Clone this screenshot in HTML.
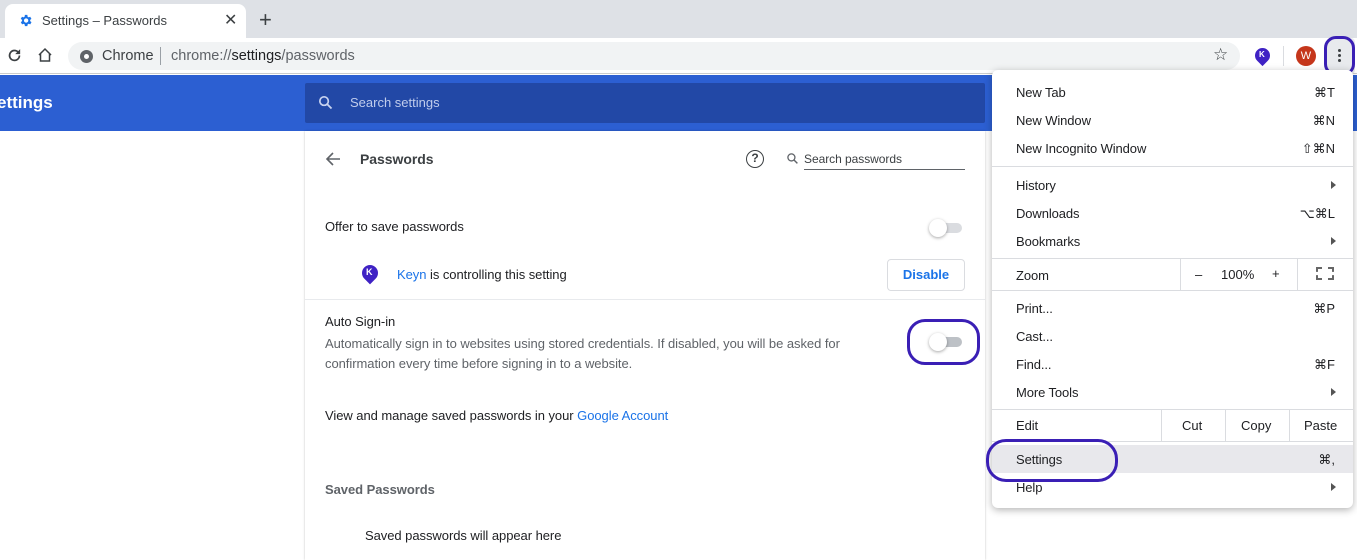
<!DOCTYPE html>
<html><head><meta charset="utf-8"><style>
*{margin:0;padding:0;box-sizing:border-box}
body{width:1357px;height:560px;overflow:hidden;position:relative;font-family:"Liberation Sans",sans-serif;background:#fff;color:#202124;font-size:13px}
.a{position:absolute;white-space:nowrap}
.t{letter-spacing:-0.05px}
.mi{position:absolute;left:1016px;font-size:13px;color:#202124;letter-spacing:-0.1px}
.sc{position:absolute;right:22px;font-size:13px;color:#202124}
.arr{position:absolute;left:1331px;width:0;height:0;border-left:5px solid #555;border-top:4px solid transparent;border-bottom:4px solid transparent}
.hr{position:absolute;left:992px;width:361px;height:1px;background:#dadce0}
.vr{position:absolute;width:1px;background:#dadce0}
</style></head><body>
<!-- tab strip -->
<div class="a" style="left:0;top:0;width:1357px;height:38px;background:#dee1e6"></div>
<div class="a" style="left:5px;top:4px;width:241px;height:36px;background:#fff;border-radius:8px 8px 0 0"></div>
<svg class="a" style="left:18px;top:13px" width="15" height="15" viewBox="0 0 24 24"><path fill="#1a73e8" d="M19.4 13a7.5 7.5 0 0 0 0-2l2.1-1.6-2-3.5-2.5 1a7 7 0 0 0-1.7-1L15 3h-4l-.4 2.9a7 7 0 0 0-1.7 1l-2.5-1-2 3.5L6.6 11a7.5 7.5 0 0 0 0 2l-2.1 1.6 2 3.5 2.5-1a7 7 0 0 0 1.7 1L11 21h4l.4-2.9a7 7 0 0 0 1.7-1l2.5 1 2-3.5zM13 15.5a3.5 3.5 0 1 1 0-7 3.5 3.5 0 0 1 0 7z"/></svg>
<div class="a" style="left:42px;top:13px;font-size:13px;color:#3c4043">Settings – Passwords</div>
<div class="a" style="left:224px;top:10px;font-size:16px;color:#3c4043">✕</div>
<div class="a" style="left:259px;top:7px;font-size:22px;color:#3c4043">+</div>
<!-- toolbar -->
<div class="a" style="left:0;top:38px;width:1357px;height:36px;background:#fff;border-bottom:1px solid #ccc"></div>
<svg class="a" style="left:6px;top:47px" width="17" height="17" viewBox="0 0 24 24"><path fill="none" stroke="#3c4043" stroke-width="2.4" d="M19 12a7 7 0 1 1-2-5"/><path fill="#3c4043" d="M20 3v7h-7z"/></svg>
<svg class="a" style="left:36px;top:46px" width="18" height="18" viewBox="0 0 24 24"><path fill="none" stroke="#3c4043" stroke-width="2" d="M4 12l8-8 8 8M6 10v10h12V10"/></svg>
<div class="a" style="left:68px;top:42px;width:1172px;height:28px;background:#f1f3f4;border-radius:14px"></div>
<div class="a" style="left:80px;top:50px;width:13px;height:13px;border-radius:50%;background:#5f6368"></div>
<div class="a" style="left:84px;top:54px;width:5px;height:5px;border-radius:50%;background:#fff"></div>
<div class="a" style="left:102px;top:48px;font-size:14.5px;color:#3c4043">Chrome</div>
<div class="a" style="left:160px;top:47px;width:1px;height:18px;background:#9aa0a6"></div>
<div class="a" style="left:171px;top:48px;font-size:14.5px;color:#5f6368">chrome://<span style="color:#202124">settings</span>/passwords</div>
<div class="a" style="left:1213px;top:45px;font-size:17px;color:#3c4043">☆</div>
<div class="a" style="left:1255px;top:48px;width:15px;height:15px;border-radius:50% 50% 50% 0;transform:rotate(-45deg);background:#3f22c4"></div>
<div class="a" style="left:1259px;top:50px;font-size:8px;color:#fff;font-weight:bold">K</div>
<div class="a" style="left:1283px;top:46px;width:1px;height:20px;background:#dadce0"></div>
<div class="a" style="left:1296px;top:46px;width:20px;height:20px;border-radius:50%;background:#c5361b;color:#fff;font-size:11px;text-align:center;line-height:20px">W</div>
<div class="a" style="left:1327px;top:38px;width:28px;height:36px;background:#e8eaed;border-radius:4px"></div>
<div class="a" style="left:1324px;top:36px;width:31px;height:40px;border:3px solid #3a1fb5;border-radius:12px"></div>
<div class="a" style="left:1338px;top:49px;width:3px;height:3px;border-radius:50%;background:#3c4043;box-shadow:0 5px 0 #3c4043,0 10px 0 #3c4043"></div>
<!-- blue header -->
<div class="a" style="left:0;top:75px;width:1357px;height:56px;background:#2c5fd2"></div>
<div class="a" style="left:-3px;top:93px;font-size:17px;color:#fff;font-weight:bold">ettings</div>
<div class="a" style="left:305px;top:83px;width:680px;height:40px;background:#2248a6;border-radius:2px"></div>
<svg class="a" style="left:317px;top:94px" width="17" height="17" viewBox="0 0 24 24"><circle cx="10" cy="10" r="6" fill="none" stroke="#c8d3f0" stroke-width="2.4"/><path d="M14.5 14.5l6 6" stroke="#c8d3f0" stroke-width="2.6"/></svg>
<div class="a" style="left:350px;top:95px;font-size:13px;color:#c0ccec">Search settings</div>
<!-- content -->
<div class="a" style="left:0;top:131px;width:1357px;height:429px;background:#fff"></div>
<div class="a" style="left:305px;top:131px;width:680px;height:429px;background:#fff;box-shadow:0 0 2px rgba(0,0,0,.25)"></div>
<svg class="a" style="left:325px;top:151px" width="16" height="16" viewBox="0 0 16 16"><path d="M15 8H2M8 2L2 8l6 6" fill="none" stroke="#5f6368" stroke-width="1.6"/></svg>
<div class="a t" style="left:360px;top:151px;font-size:14px;font-weight:bold;color:#3c4043">Passwords</div>
<div class="a" style="left:746px;top:150px;width:18px;height:18px;border:1.6px solid #3c4043;border-radius:50%;font-size:12px;text-align:center;line-height:15px;font-weight:bold;color:#3c4043">?</div>
<svg class="a" style="left:786px;top:152px" width="13" height="13" viewBox="0 0 24 24"><circle cx="10" cy="10" r="6.5" fill="none" stroke="#5f6368" stroke-width="2.4"/><path d="M15 15l6 6" stroke="#5f6368" stroke-width="2.6"/></svg>
<div class="a t" style="left:804px;top:152px;font-size:12px;color:#3c4043">Search passwords</div>
<div class="a" style="left:804px;top:169px;width:161px;height:1px;background:#5f6368"></div>
<div class="a t" style="left:325px;top:219px">Offer to save passwords</div>
<div class="a" style="left:932px;top:223px;width:30px;height:10px;border-radius:5px;background:#dadce0"></div>
<div class="a" style="left:929px;top:219px;width:18px;height:18px;border-radius:50%;background:#fff;box-shadow:0 1px 3px rgba(0,0,0,.35)"></div>
<div class="a" style="left:362px;top:265px;width:16px;height:16px;border-radius:50% 50% 50% 0;transform:rotate(-45deg);background:#3f22c4"></div>
<div class="a" style="left:366px;top:267px;font-size:9px;color:#fff;font-weight:bold">K</div>
<div class="a t" style="left:397px;top:267px"><span style="color:#1a73e8">Keyn</span> is controlling this setting</div>
<div class="a" style="left:887px;top:259px;width:78px;height:32px;border:1px solid #dadce0;border-radius:4px;color:#1a73e8;font-weight:bold;text-align:center;line-height:30px;font-size:13px">Disable</div>
<div class="a" style="left:305px;top:299px;width:680px;height:1px;background:#e8eaed"></div>
<div class="a t" style="left:325px;top:314px">Auto Sign-in</div>
<div class="a t" style="left:325px;top:334px;color:#5f6368;line-height:20px">Automatically sign in to websites using stored credentials. If disabled, you will be asked for<br>confirmation every time before signing in to a website.</div>
<div class="a" style="left:932px;top:337px;width:30px;height:10px;border-radius:5px;background:#bdc1c6"></div>
<div class="a" style="left:929px;top:333px;width:18px;height:18px;border-radius:50%;background:#fff;box-shadow:0 1px 3px rgba(0,0,0,.35)"></div>
<div class="a" style="left:907px;top:319px;width:73px;height:46px;border:3px solid #3a1fb5;border-radius:18px"></div>
<div class="a t" style="left:325px;top:408px">View and manage saved passwords in your <span style="color:#1a73e8">Google Account</span></div>
<div class="a t" style="left:325px;top:482px;font-weight:bold;color:#5f6368">Saved Passwords</div>
<div class="a t" style="left:365px;top:528px">Saved passwords will appear here</div>
<!-- menu -->
<div class="a" style="left:992px;top:70px;width:361px;height:438px;background:#fff;border-radius:6px;box-shadow:0 2px 8px rgba(0,0,0,.3)"></div>
<div class="mi" style="top:85px">New Tab</div><div class="sc" style="top:85px">⌘T</div>
<div class="mi" style="top:113px">New Window</div><div class="sc" style="top:113px">⌘N</div>
<div class="mi" style="top:141px">New Incognito Window</div><div class="sc" style="top:141px">⇧⌘N</div>
<div class="hr" style="top:166px"></div>
<div class="mi" style="top:178px">History</div><div class="arr" style="top:181px"></div>
<div class="mi" style="top:206px">Downloads</div><div class="sc" style="top:206px">⌥⌘L</div>
<div class="mi" style="top:234px">Bookmarks</div><div class="arr" style="top:237px"></div>
<div class="hr" style="top:258px"></div>
<div class="mi" style="top:268px">Zoom</div>
<div class="vr" style="left:1180px;top:258px;height:32px"></div>
<div class="a" style="left:1195px;top:267px;color:#202124">–</div>
<div class="a" style="left:1221px;top:267px;color:#202124">100%</div>
<div class="a" style="left:1272px;top:266px;color:#202124">+</div>
<div class="vr" style="left:1297px;top:258px;height:32px"></div>
<div class="a" style="left:1316px;top:267px;width:18px;height:13px;border:2px dashed #666"></div>
<div class="hr" style="top:290px"></div>
<div class="mi" style="top:301px">Print...</div><div class="sc" style="top:301px">⌘P</div>
<div class="mi" style="top:329px">Cast...</div>
<div class="mi" style="top:357px">Find...</div><div class="sc" style="top:357px">⌘F</div>
<div class="mi" style="top:385px">More Tools</div><div class="arr" style="top:388px"></div>
<div class="hr" style="top:409px"></div>
<div class="mi" style="top:418px">Edit</div>
<div class="vr" style="left:1161px;top:409px;height:32px"></div>
<div class="a" style="left:1182px;top:418px">Cut</div>
<div class="vr" style="left:1225px;top:409px;height:32px"></div>
<div class="a" style="left:1241px;top:418px">Copy</div>
<div class="vr" style="left:1289px;top:409px;height:32px"></div>
<div class="a" style="left:1304px;top:418px">Paste</div>
<div class="hr" style="top:441px"></div>
<div class="a" style="left:992px;top:445px;width:361px;height:28px;background:#e8e8ec"></div>
<div class="mi" style="top:452px">Settings</div><div class="sc" style="top:452px">⌘,</div>
<div class="mi" style="top:480px">Help</div><div class="arr" style="top:483px"></div>
<div class="a" style="left:986px;top:439px;width:132px;height:43px;border:3px solid #3a1fb5;border-radius:20px"></div>
</body></html>
